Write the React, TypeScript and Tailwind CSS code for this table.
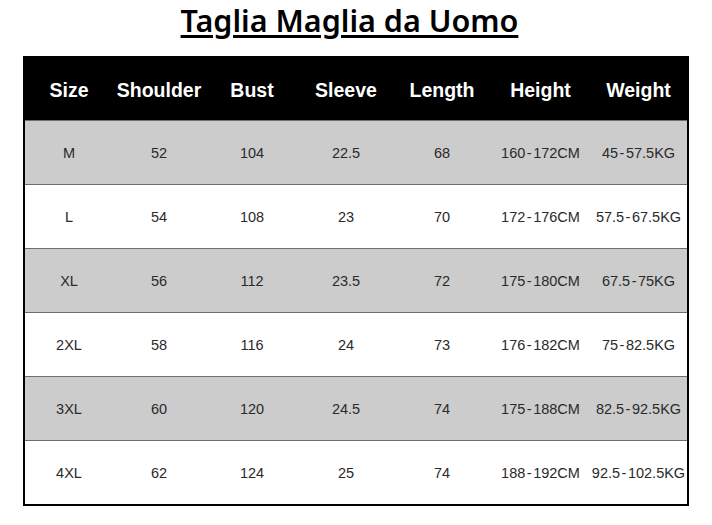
const columns = [
  { key: "size", label: "Size", width: "w-[88px]" },
  { key: "shoulder", label: "Shoulder", width: "w-[92px]" },
  { key: "bust", label: "Bust", width: "w-[94px]" },
  { key: "sleeve", label: "Sleeve", width: "w-[94px]" },
  { key: "length", label: "Length", width: "w-[98px]" },
  { key: "height", label: "Height", width: "w-[99px]" },
  { key: "weight", label: "Weight", width: "w-[97px]" },
];

const rows = [
  ["M", "52", "104", "22.5", "68", "160-172CM", "45-57.5KG"],
  ["L", "54", "108", "23", "70", "172-176CM", "57.5-67.5KG"],
  ["XL", "56", "112", "23.5", "72", "175-180CM", "67.5-75KG"],
  ["2XL", "58", "116", "24", "73", "176-182CM", "75-82.5KG"],
  ["3XL", "60", "120", "24.5", "74", "175-188CM", "82.5-92.5KG"],
  ["4XL", "62", "124", "25", "74", "188-192CM", "92.5-102.5KG"],
];

// ranges use a wider dash, as in the original chart
function Cell({ value }: { value: string }) {
  const parts = value.split("-");
  if (parts.length === 1) return <>{value}</>;
  return (
    <>
      {parts[0]}
      <span className="mx-[1.5px]">-</span>
      {parts[1]}
    </>
  );
}

export default function App() {
  return (
    <div className="w-[712px] h-[525px] bg-white" style={{ fontFamily: '"Liberation Sans", Arial, sans-serif' }}>
      <div className="h-[56px] flex justify-center pr-[13px]">
        <h1
          className="text-[30.5px] leading-none font-semibold text-black underline decoration-[2.5px] underline-offset-[3px] pt-[5px]"
          style={{ fontFamily: '"Noto Sans", "Open Sans", sans-serif' }}
        >
          Taglia Maglia da Uomo
        </h1>
      </div>
      <div className="ml-[23px] w-[666px] border-x-2 border-b-2 border-black">
        <div className="flex h-[64px] bg-black items-center pt-[5px]">
          {columns.map((c) => (
            <div key={c.key} className={`${c.width} text-center text-white text-[19.5px] font-bold`}>
              {c.label}
            </div>
          ))}
        </div>
        {rows.map((r, i) => (
          <div
            key={r[0]}
            className={`flex h-[64px] items-center pt-[2px] border-t border-[#6e6e6e] ${i % 2 === 0 ? "bg-[#cccccc]" : "bg-white"}`}
          >
            {r.map((v, j) => (
              <div key={j} className={`${columns[j].width} text-center text-[14.5px] text-[#2a2a2a]`}>
                <Cell value={v} />
              </div>
            ))}
          </div>
        ))}
      </div>
    </div>
  );
}
